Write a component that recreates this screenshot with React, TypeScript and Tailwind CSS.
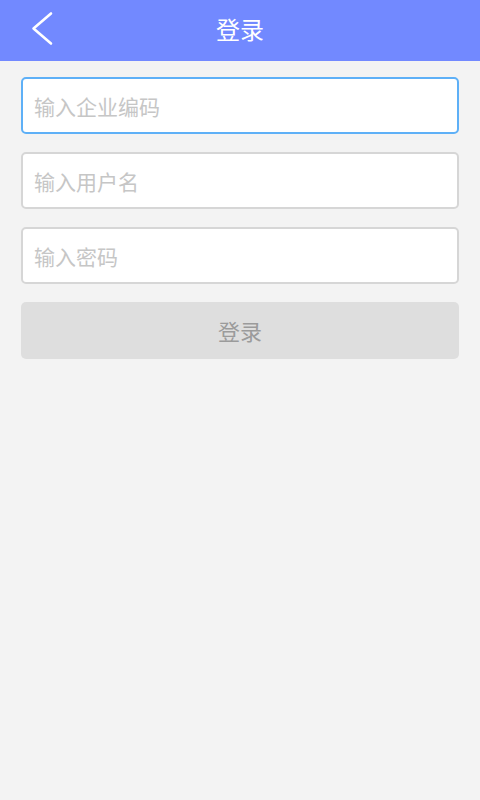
export default function App() {
  return (
    <div className="min-h-[800px] bg-[#f3f3f3] font-['Noto_Sans_CJK_SC',sans-serif]">
      <header className="relative flex h-[61px] items-center justify-center bg-[#7289ff]">
        <button className="absolute left-[30px] top-[11px]">
          <svg width="24" height="36" viewBox="0 0 24 36" fill="none">
            <path d="M21 2.5 L3.5 17.5 L21 32.5" stroke="white" strokeWidth="2.6" strokeLinecap="round" strokeLinejoin="round" />
          </svg>
        </button>
        <h1 className="-mt-[3px] text-[24px] leading-none text-white">登录</h1>
      </header>

      <div className="flex flex-col px-[21px] pt-[16px]">
        <input
          placeholder="输入企业编码"
          className="h-[57px] rounded-[5px] border-2 border-[#5eb0f7] bg-white px-[11px] text-[21px] text-[#333] outline-none placeholder:text-[#c6c6c6]"
        />
        <input
          placeholder="输入用户名"
          className="mt-[18px] h-[57px] rounded-[5px] border-2 border-[#d6d6d6] bg-white px-[11px] text-[21px] text-[#333] outline-none placeholder:text-[#c6c6c6]"
        />
        <input
          type="password"
          placeholder="输入密码"
          className="mt-[18px] h-[57px] rounded-[5px] border-2 border-[#d6d6d6] bg-white px-[11px] text-[21px] text-[#333] outline-none placeholder:text-[#c6c6c6]"
        />
        <button className="mt-[18px] h-[57px] rounded-[5px] bg-[#dedede] text-[22px] text-[#9b9b9b]">
          登录
        </button>
      </div>
    </div>
  );
}
